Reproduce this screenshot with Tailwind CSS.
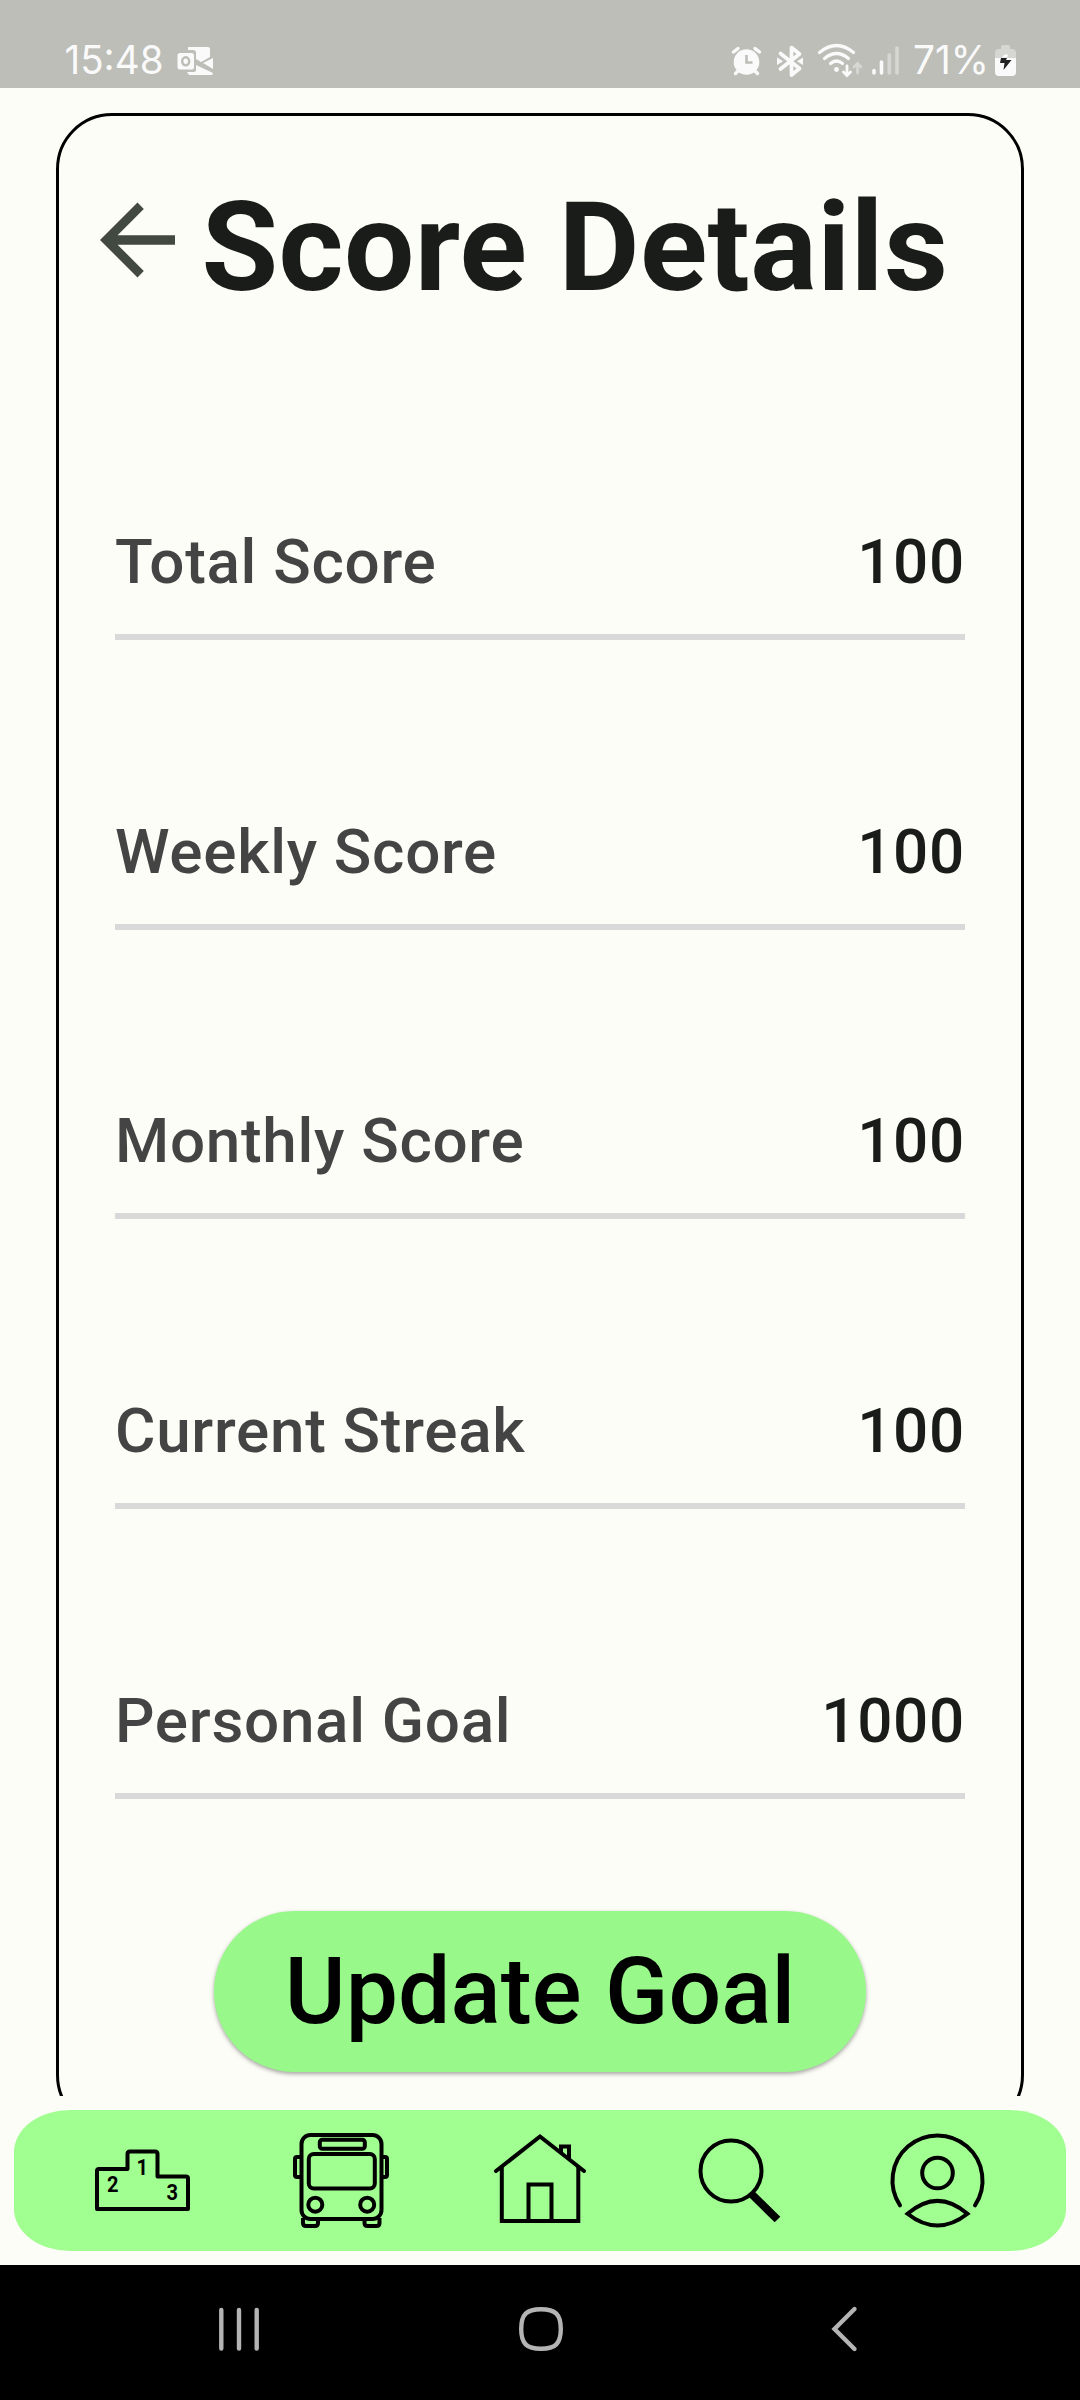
<!DOCTYPE html>
<html lang="en">
<head>
<meta charset="utf-8">
<title>Score Details</title>
<script src="https://cdn.jsdelivr.net/npm/@tailwindcss/browser@4"></script>
</head>
<body class="bg-[#fcfdf6] font-[Roboto,sans-serif]">
<div class="flex h-[2400px] w-[1080px] flex-col overflow-hidden bg-[#fcfdf6]">
  <header class="flex h-[88px] shrink-0 bg-[#bdbeb8] text-[#fafafa]">
    <svg class="h-[88px] w-[1080px]" viewBox="0 0 1080 88" fill="none">
      <g fill="#fafafa" font-family="Inter, sans-serif" font-size="39">
        <text x="64.500" y="74" textLength="99" lengthAdjust="spacingAndGlyphs">15:48</text>
        <text x="913" y="74" textLength="76" lengthAdjust="spacingAndGlyphs">71%</text>
      </g>
      <!-- mail -->
      <path d="M188 47h20q2 0 2 2v8l-9 5-5-3v-6q0-3-3-3h-5zM213 58v11l-10-6zM187 72h6q3 0 3-2v-5l17 8q0 2-2 2h-22z" fill="#fafafa"/>
      <rect x="177.500" y="53" width="16.500" height="16.500" rx="2.500" fill="#fafafa"/>
      <ellipse cx="185.700" cy="61.300" rx="3.500" ry="4" stroke="#bdbeb8" stroke-width="2.500"/>
      <!-- alarm -->
      <circle cx="746.500" cy="62" r="12.800" fill="#fafafa"/>
      <path d="M733.500 52l4.500-3.500M759.500 52l-4.500-3.500M739 70l-3.500 3.500M754 70l3.500 3.500" stroke="#fafafa" stroke-width="3.400" stroke-linecap="round"/>
      <path d="M746.500 55v7.500h6" stroke="#bdbeb8" stroke-width="2.600"/>
      <!-- bluetooth -->
      <path d="M780.500 53.500l19 15-8 6.500V47.500l8 6.500-19 15" stroke="#fafafa" stroke-width="3.700" stroke-linejoin="round" stroke-linecap="round"/>
      <path d="M777 57.500l6 3.700-6 3.700zM803 57.500l-6 3.700 6 3.700z" fill="#fafafa"/>
      <!-- wifi -->
      <g stroke="#fafafa" stroke-width="3.200" stroke-linecap="round">
        <path d="M819.500 52.500q17-14 34 0M824.500 58.500q12-10 24 0M830.500 63.500q6-5 12 0"/>
        <path d="M847 66v9M843.500 72l3.500 3.500 3.500-3.500" stroke-width="2.800"/>
        <path d="M857.500 73v-9.500M854 67l3.500-3.500 3.500 3.500" stroke="#d6d7d2" stroke-width="2.800"/>
      </g>
      <circle cx="836.500" cy="69.500" r="2.400" fill="#fafafa"/>
      <!-- signal -->
      <g stroke-width="3.600" stroke-linecap="round">
        <path d="M874 70.500v2.500M881.500 62v11" stroke="#fafafa"/>
        <path d="M889.300 55v18M897 48v25" stroke="#d6d7d2"/>
      </g>
      <!-- battery -->
      <path d="M1001 47q0-2 2-2h5q2 0 2 2v2h2q4 0 4 4v5h-21v-5q0-4 4-4h2z" fill="#d6d7d2"/>
      <path d="M995 58h21v14q0 4-4 4h-13q-4 0-4-4z" fill="#fafafa"/>
      <path d="M1001 58h6l-1 2h5.500l-8 10 1-7h-4.500z" fill="#222"/>
      <path d="M1002 57.500l2-2.500q2-1.500 4 0l-1 2.500z" fill="#fafafa"/>
    </svg>
  </header>

  <main class="h-[2008px] shrink-0 overflow-hidden px-14 pt-[25px]">
    <section class="flex h-[2018px] w-[968px] flex-col rounded-[56px] border-[3px] border-black px-14">
      <div class="flex h-[234.300px] shrink-0 items-start pt-[58px]">
        <svg class="-ml-[15px] mt-[27.600px] h-[76px] w-[76px] shrink-0" viewBox="0 0 76 76"><path d="M75 33.300H17.600L43.800 7.100 37.500 0.500 0 38l37.500 37.500 6.300-6.600L17.600 42.700H75z" fill="#424940"/></svg>
        <h1 class="ml-[25.500px] text-[124.700px] leading-[146px] font-bold tracking-[0.350px] whitespace-nowrap text-[#1a1c19]">Score Details</h1>
      </div>
      <dl class="flex shrink-0 flex-col text-[62px] leading-[72px] font-medium tracking-[0.700px] text-[#1a1c19]">
        <div class="flex h-[289.700px] items-end justify-between border-b-6 border-[#d9d9d9] pb-[36px]"><dt class="text-[#444]">Total Score</dt><dd>100</dd></div>
        <div class="flex h-[289.700px] items-end justify-between border-b-6 border-[#d9d9d9] pb-[36px]"><dt class="text-[#444]">Weekly Score</dt><dd>100</dd></div>
        <div class="flex h-[289.700px] items-end justify-between border-b-6 border-[#d9d9d9] pb-[36px]"><dt class="text-[#444]">Monthly Score</dt><dd>100</dd></div>
        <div class="flex h-[289.700px] items-end justify-between border-b-6 border-[#d9d9d9] pb-[36px]"><dt class="text-[#444]">Current Streak</dt><dd>100</dd></div>
        <div class="flex h-[289.700px] items-end justify-between border-b-6 border-[#d9d9d9] pb-[36px]"><dt class="text-[#444]">Personal Goal</dt><dd>1000</dd></div>
      </dl>
      <button class="mt-[112.200px] flex h-[161px] w-[652px] shrink-0 items-center justify-center self-center rounded-full bg-[#98f98a] text-[93px] leading-none font-medium tracking-[0.100px] whitespace-nowrap text-black shadow-[0_2px_4px_rgba(0,0,0,0.35)]">Update Goal</button>
    </section>
  </main>

  <nav class="mx-[14px] mt-[14px] flex h-[141px] shrink-0 rounded-[56px/42px] bg-[#a0ff90]">
    <svg class="h-[141px] w-[1052px]" viewBox="14 2110 1052 141" fill="none" stroke="#000" stroke-width="4">
      <!-- podium -->
      <path d="M97 2209v-38q0-2 2-2h28.500v-15q0-2.500 2.500-2.500h25q2.500 0 2.500 2.500v22.500h28.500q2 0 2 2v30.500z" stroke-linejoin="round"/>
      <g fill="#000" stroke="none" font-family="Roboto, sans-serif" font-weight="700" font-size="22">
        <text x="107" y="2192" textLength="11.500" lengthAdjust="spacingAndGlyphs">2</text>
        <text x="136.500" y="2175" textLength="11.500" lengthAdjust="spacingAndGlyphs">1</text>
        <text x="166.500" y="2199.500" textLength="11.500" lengthAdjust="spacingAndGlyphs">3</text>
      </g>
      <!-- bus -->
      <rect x="301.500" y="2135" width="80" height="84" rx="9"/>
      <rect x="319.800" y="2139.800" width="45" height="9" rx="2.500"/>
      <rect x="308.800" y="2154" width="66" height="34.500" rx="5"/>
      <circle cx="315.300" cy="2204.700" r="7"/><circle cx="367.200" cy="2204.700" r="7"/>
      <path d="M300 2157h-3q-2 0-2 2v16q0 2 2 2h3M383 2157h2q2 0 2 2v16q0 2-2 2h-2M303 2218v5q0 3 3 3h9q3 0 3-3v-4M364.500 2219v4q0 3 3 3h9q3 0 3-3v-5"/>
      <!-- home -->
      <path d="M501.800 2167v54h76.500v-54M528.500 2220v-35.500h23V2220"/>
      <path d="M496 2171l44-34.500 44 34.500" stroke-linecap="round"/>
      <path d="M561 2152.500v-6h8v12"/>
      <!-- search -->
      <circle cx="731" cy="2171" r="30.500"/>
      <path d="M751.500 2194l26 25.500" stroke-width="8"/>
      <!-- profile -->
      <path d="M900 2205.300A45 45 0 1 1 975 2205.300" stroke-linecap="round"/>
      <circle cx="937.500" cy="2173" r="15.300"/>
      <path d="M907.500 2213.800q30-26 60 0-30 23.500-60 0z"/>
    </svg>
  </nav>

  <footer class="mt-[14px] flex h-[135px] shrink-0 bg-black">
    <svg class="h-[135px] w-[1080px]" viewBox="0 2265 1080 135" fill="none" stroke="#b4b4b4" stroke-width="4.400" stroke-linecap="round">
      <path d="M221.300 2310v38.500M239 2310v38.500M256.700 2310v38.500"/>
      <path d="M541 2309.200c14.500 0 19.800 5.300 19.800 19.800s-5.300 19.800-19.800 19.800-19.800-5.300-19.800-19.800 5.300-19.800 19.800-19.800z"/>
      <path d="M854.500 2309l-20 20 20 20"/>
    </svg>
  </footer>
</div>
</body>
</html>
